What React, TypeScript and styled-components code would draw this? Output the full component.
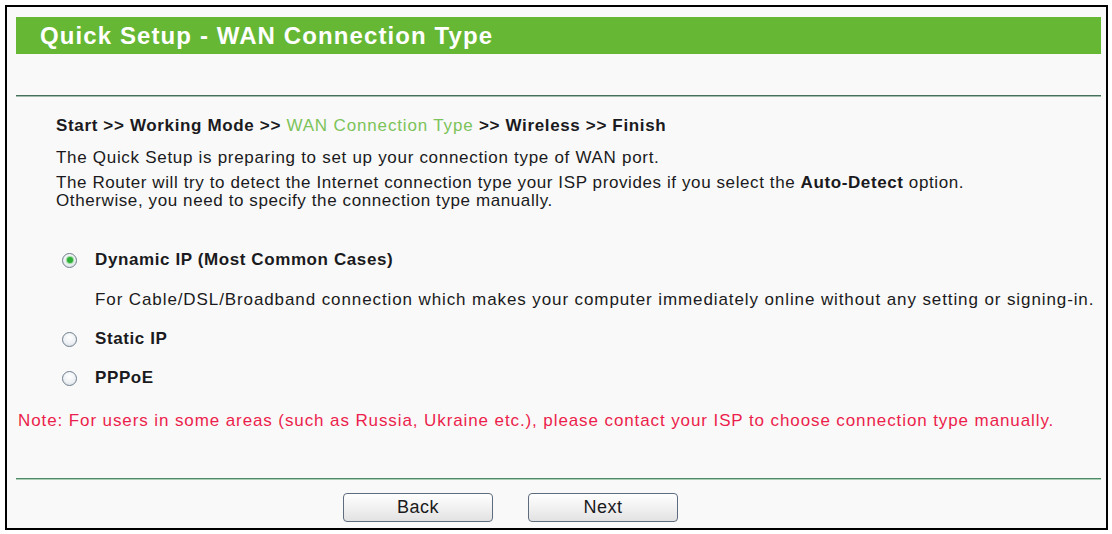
import React, { useState } from "react";
import styled, { createGlobalStyle } from "styled-components";

const GlobalStyle = createGlobalStyle`
  html, body {
    margin: 0;
    padding: 0;
    background: #ffffff;
  }
  body {
    font-family: "Liberation Sans", Arial, sans-serif;
  }
`

const Frame = styled.div`
  box-sizing: border-box;
  margin: 5px 0 0 5px;
  width: 1103px;
  height: 525px;
  border: 2px solid #000;
  background: #f9f9f9;
  padding: 10px 5px 0 9px;
  font-size: 17px;
  letter-spacing: 0.6px;
  color: #1a1a20;
`

const TitleBar = styled.div`
  height: 37px;
  line-height: 37px;
  background: #66b834;
  color: #fff;
  font-weight: bold;
  font-size: 24px;
  letter-spacing: 1.1px;
  padding-left: 24px;
`

const Divider = styled.div<{ $mt: number; $tone?: "dark" | "green" }>`
  margin-top: ${(p) => p.$mt}px;
  height: 1px;
  background: ${(p) => (p.$tone === "green" ? "#4f8c66" : "#46705c")};
  border-bottom: 1px solid ${(p) => (p.$tone === "green" ? "#a9cdb5" : "#a3bcae")};
`

const Line = styled.div<{ $mt: number; $indent: number; $ls?: number }>`
  margin-top: ${(p) => p.$mt}px;
  padding-left: ${(p) => p.$indent}px;
  line-height: 18px;
  letter-spacing: ${(p) => p.$ls ?? 0.6}px;
  white-space: nowrap;
`

const Crumb = styled.span<{ $active?: boolean }>`
  font-weight: ${(p) => (p.$active ? "normal" : "bold")};
  color: ${(p) => (p.$active ? "#7cc35a" : "#1a1a20")};
  letter-spacing: ${(p) => (p.$active ? 0.85 : 0.65)}px;
`

const OptionRow = styled.label<{ $mt: number }>`
  display: flex;
  align-items: center;
  margin-top: ${(p) => p.$mt}px;
  padding-left: 46px;
  height: 18px;
  font-weight: bold;
  cursor: pointer;
`

const Radio = styled.span<{ $checked: boolean }>`
  box-sizing: border-box;
  width: 15px;
  height: 15px;
  border-radius: 50%;
  border: 1.5px solid #6e7e8d;
  background: radial-gradient(circle at 50% 35%, #ffffff 0%, #eef1f4 55%, #d3d9df 100%);
  display: flex;
  align-items: center;
  justify-content: center;
  margin-right: 18px;
  &::after {
    content: "";
    display: ${(p) => (p.$checked ? "block" : "none")};
    width: 6px;
    height: 6px;
    border-radius: 50%;
    background: #2fae3a;
    box-shadow: 0 0 1px 1px #9ad89a;
  }
`

const Note = styled.div`
  margin-top: 25px;
  padding-left: 2px;
  line-height: 18px;
  letter-spacing: 0.9px;
  white-space: nowrap;
  color: #ec1e4c;
`

const ButtonRow = styled.div`
  display: flex;
  gap: 35px;
  margin-top: 13px;
  padding-left: 327px;
`

const Button = styled.button`
  box-sizing: border-box;
  width: 150px;
  height: 29px;
  border: 1.5px solid #5e6d7e;
  border-radius: 4px;
  background: linear-gradient(#ffffff, #f1f1f1 50%, #e2e2e2);
  font-family: "Liberation Sans", Arial, sans-serif;
  font-size: 18px;
  letter-spacing: 0.5px;
  color: #1a1a20;
  padding: 0;
  cursor: pointer;
`

const options = [
  { key: "dynamic", label: "Dynamic IP (Most Common Cases)" },
  { key: "static", label: "Static IP" },
  { key: "pppoe", label: "PPPoE" },
]

export default function App(): React.JSX.Element {
  const [selected, setSelected] = useState<string>("dynamic");

  return (
    <>
      <GlobalStyle />
      <Frame>
        <TitleBar>Quick Setup - WAN Connection Type</TitleBar>
        <Divider $mt={41} />
        <Line $mt={20} $indent={40}>
          <Crumb>Start &gt;&gt; Working Mode &gt;&gt; </Crumb>
          <Crumb $active>WAN Connection Type</Crumb>
          <Crumb> &gt;&gt; Wireless &gt;&gt; Finish</Crumb>
        </Line>
        <Line $mt={14} $indent={40} $ls={0.7}>
          The Quick Setup is preparing to set up your connection type of WAN port.
        </Line>
        <Line $mt={7} $indent={40}>
          The Router will try to detect the Internet connection type your ISP provides if you select the{" "}
          <b>Auto-Detect</b> option.
          <br />
          Otherwise, you need to specify the connection type manually.
        </Line>
        <OptionRow $mt={41} onClick={() => setSelected(options[0].key)}>
          <Radio $checked={selected === options[0].key} />
          {options[0].label}
        </OptionRow>
        <Line $mt={22} $indent={79} $ls={0.9}>
          For Cable/DSL/Broadband connection which makes your computer immediately online without any setting or signing-in.
        </Line>
        {options.slice(1).map((o) => (
          <OptionRow key={o.key} $mt={21} onClick={() => setSelected(o.key)}>
            <Radio $checked={selected === o.key} />
            {o.label}
          </OptionRow>
        ))}
        <Note>
          Note: For users in some areas (such as Russia, Ukraine etc.), please contact your ISP to choose connection type manually.
        </Note>
        <Divider $mt={48} $tone="green" />
        <ButtonRow>
          <Button>Back</Button>
          <Button>Next</Button>
        </ButtonRow>
      </Frame>
    </>
  )
}
